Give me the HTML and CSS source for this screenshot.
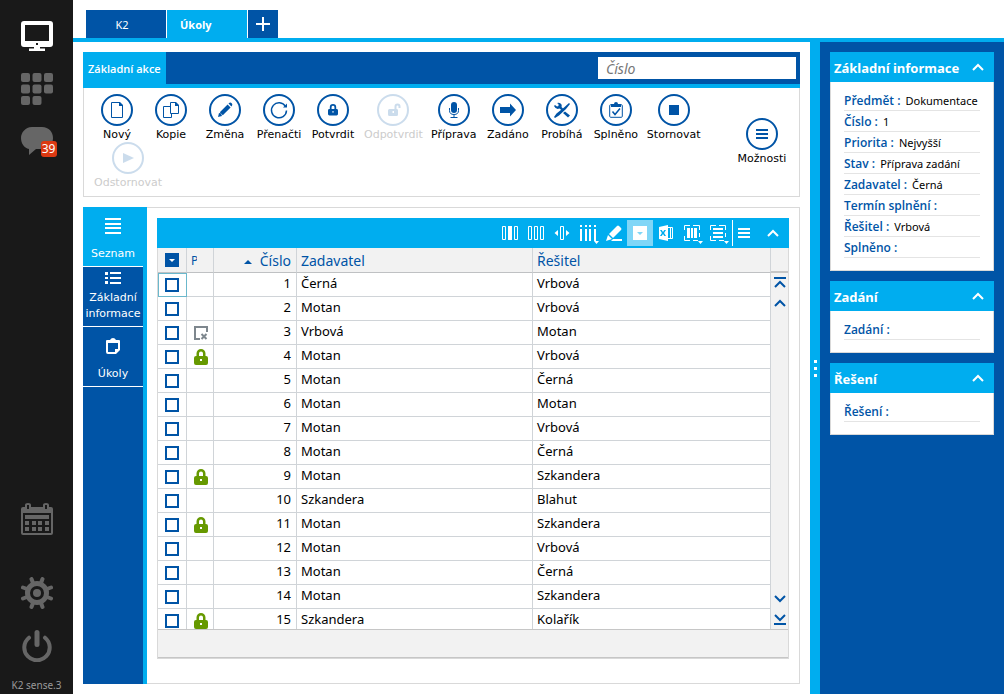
FILE: index.html
```html
<!DOCTYPE html>
<html lang="cs">
<head>
<meta charset="utf-8">
<title>K2 – Úkoly</title>
<link rel="stylesheet" href="styles.css">
</head>
<body>
<svg class="sprite" aria-hidden="true">
  <symbol id="lock" viewBox="0 0 14 16"><path fill-rule="evenodd" d="M2.500 7V4.500a4.500 4.500 0 0 1 9 0V7H12q2 0 2 2v5q0 2-2 2H2q-2 0-2-2V9q0-2 2-2zM5 7h4V4.500a2 2 0 0 0-4 0zM6 10v2h2v-2z"/></symbol>
  <symbol id="up" viewBox="0 0 12 8"><path d="M1 7l5-5 5 5" fill="none" stroke="currentColor" stroke-width="2"/></symbol>
</svg>
<div class="app">
  <nav class="rail" aria-label="Hlavní">
    <button class="rail-btn active" aria-label="Plocha"><svg viewBox="0 0 32 32"><path fill-rule="evenodd" d="M3 1h26q3 0 3 3v20q0 3-3 3H19v1.500h5V31H8v-2.500h5V27H3q-3 0-3-3V4q0-3 3-3zM4 5v16h24V5zM15 23v2h2v-2z"/></svg></button>
    <button class="rail-btn" aria-label="Moduly"><svg viewBox="0 0 32 32"><g><rect width="9" height="9" rx="2"/><rect x="11.500" width="9" height="9" rx="2"/><rect x="23" width="9" height="9" rx="2"/><rect y="11.500" width="9" height="9" rx="2"/><rect x="11.500" y="11.500" width="9" height="9" rx="2"/><rect x="23" y="11.500" width="9" height="9" rx="2"/><rect y="23" width="9" height="9" rx="2"/><rect x="11.500" y="23" width="9" height="9" rx="2"/></g></svg></button>
    <button class="rail-btn" aria-label="Zprávy"><svg viewBox="0 0 32 32"><path d="M11 1h10c7 0 11 5 11 11s-4 11-11 11h-6l-7 6v-6C3 22 0 17 0 12S4 1 11 1z"/></svg><span class="badge">39</span></button>
    <span class="rail-space"></span>
    <button class="rail-btn" aria-label="Kalendář"><svg viewBox="0 0 32 32"><path fill-rule="evenodd" d="M2 4h2V2q0-2 3-2t3 2v2h12V2q0-2 3-2t3 2v2h2q2 0 2 2v24q0 2-2 2H2q-2 0-2-2V6q0-2 2-2zM6 2v4h2V2zM24 2v4h2V2zM2 10v20h28V10z"/><path d="M4 12h24v4H4zM4 18h4v4H4zM11 18h4v4h-4zM17 18h4v4h-4zM24 18h4v4h-4zM4 24h4v4H4zM11 24h4v4h-4zM17 24h4v4h-4zM24 24h4v4h-4z"/></svg></button>
    <button class="rail-btn gear" aria-label="Nastavení"><svg viewBox="0 0 32 32"><circle class="ring" cx="16" cy="16" r="9.500"/><circle cx="16" cy="16" r="4"/><g stroke="currentColor" stroke-width="4" stroke-linecap="round"><path d="M12 6l-1.500-4M20 6l1.500-4M12 26l-1.500 4M20 26l1.500 4M6 12l-4-1.500M6 20l-4 1.500M26 12l4-1.500M26 20l4 1.500"/></g></svg></button>
    <button class="rail-btn" aria-label="Odhlásit"><svg viewBox="0 0 32 32"><g fill="none" stroke="currentColor" stroke-linecap="round"><path stroke-width="5" d="M16 2.500v12"/><path stroke-width="4" d="M8 7.700a12.700 12.700 0 1 0 16 0"/></g></svg></button>
    <span class="version">K2 sense.3</span>
  </nav>

  <div class="stage">
    <div class="tabs" role="tablist">
      <button class="tab" role="tab">K2</button>
      <button class="tab current" role="tab" aria-selected="true">Úkoly</button>
      <button class="tab-add" aria-label="Nová záložka"><svg viewBox="0 0 14 14"><path d="M7 0v14M0 7h14" stroke="#fff" stroke-width="2"/></svg></button>
    </div>
    <div class="workspace">
      <main class="main">
        <section class="ribbon">
          <div class="ribbon-head">
            <button class="ribbon-tab">Základní akce</button>
            <input class="search" type="text" placeholder="Číslo" aria-label="Číslo">
          </div>
          <div class="ribbon-body">
            <div class="actions">
              <button class="action"><svg viewBox="0 0 32 32"><circle cx="16" cy="16" r="15"/><path d="M10.500 8.500h8l3 3v12h-11z"/><path class="solid" d="M18 8h1l3 3v1h-4z"/></svg>Nový</button>
              <button class="action"><svg viewBox="0 0 32 32"><circle cx="16" cy="16" r="15"/><path d="M15.500 12.500h-7v11h8v-4M15.500 8.500h5l3 3v8h-8z"/><path class="solid" d="M20 8h1l3 3v1h-4z"/></svg>Kopie</button>
              <button class="action"><svg viewBox="0 0 32 32"><circle cx="16" cy="16" r="15"/><path class="solid" d="M9 23l1-4 2 0.500 1 2.500zM10.800 18.200l7.800-7.800 3 3-7.800 7.800zM19.500 9.500l1-.7q1.200-.6 2.200.5 1 1 .4 2.200l-.7 1z"/></svg>Změna</button>
              <button class="action"><svg viewBox="0 0 32 32"><circle cx="16" cy="16" r="15"/><path class="mid" d="M22.500 12.500a7.500 7.500 0 1 0 1 4"/><path class="solid" d="M20 13.500h4v-4z"/></svg>Přenačti</button>
              <button class="action"><svg viewBox="0 0 32 32"><circle cx="16" cy="16" r="15"/><use class="solid" href="#lock" x="11" y="9.500" width="10" height="12.500"/></svg>Potvrdit</button>
              <button class="action" disabled><svg viewBox="0 0 32 32"><circle cx="16" cy="16" r="15"/><path class="solid" fill-rule="evenodd" d="M12.500 15H20q1 0 1 1.500v4q0 1.500-1.500 1.500h-7q-1.500 0-1.500-1.500v-4q0-1.500 1.500-1.500zM15.500 17v2h1.500v-2z"/><path class="thick" d="M18.500 15.500V12.500q0-2 2-2t2 2V14"/></svg>Odpotvrdit</button>
              <button class="action"><svg viewBox="0 0 32 32"><circle cx="16" cy="16" r="15"/><rect class="solid" x="13" y="8" width="6" height="11" rx="3"/><path d="M11.500 14v2.500q0 4 4.500 4t4.500-4V14M16 21v3M12.500 23.500h7"/></svg>Příprava</button>
              <button class="action"><svg viewBox="0 0 32 32"><circle cx="16" cy="16" r="15"/><path class="solid" d="M8 13h10v-3.500l6 6.500-6 6.500V19H8z"/></svg>Zadáno</button>
              <button class="action"><svg viewBox="0 0 32 32"><circle cx="16" cy="16" r="15"/><path class="solid" d="M8 12l1-1 2 1.500 1.500-.5V10L11 9q3-1 4.500 1.500.5 1.500 0 2.500L18 15.500l-1.500 1.500-3-2.500Q10 16 8 12zM23 9l1 1-4 5-7 6.500-4 2.500-1-1 2.500-3.500 7.500-6zM19 17.500l5 4-2 2-5-4.500z"/></svg>Probíhá</button>
              <button class="action"><svg viewBox="0 0 32 32"><circle cx="16" cy="16" r="15"/><rect x="9.700" y="10.700" width="12.600" height="12.600" rx="1"/><path class="solid" d="M11 10h3q0-2 2-2t2 2h3v3H11z"/><path class="mid" d="M12.500 17.500l2.500 3 5-6"/></svg>Splněno</button>
              <button class="action"><svg viewBox="0 0 32 32"><circle cx="16" cy="16" r="15"/><path class="solid" d="M11 11h10v10H11z"/></svg>Stornovat</button>
              <button class="action" disabled><svg viewBox="0 0 32 32"><circle cx="16" cy="16" r="15"/><path class="solid" d="M11 11l11 5-11 5z"/></svg>Odstornovat</button>
            </div>
            <button class="action options"><svg viewBox="0 0 32 32"><circle cx="16" cy="16" r="15"/><path class="solid" d="M10 11h12v2H10zM10 15h12v2H10zM10 19h12v2H10z"/></svg>Možnosti</button>
          </div>
        </section>

        <section class="content">
          <nav class="views" aria-label="Pohledy">
            <button class="view current"><svg width="16" height="16" viewBox="0 0 16 16"><path d="M0 0h16v2H0zM0 5h16v2H0zM0 9h16v2H0zM0 14h16v2H0z"/></svg><span>Seznam</span></button>
            <button class="view tight"><svg width="16" height="12" viewBox="0 0 16 12"><path d="M0 0h3v3H0zM5 0h11v2H5zM0 5h3v2H0zM5 5h11v2H5zM0 9h3v3H0zM5 10h11v2H5z"/></svg><span>Základní informace</span></button>
            <button class="view"><svg width="16" height="16" viewBox="0 0 16 16"><path fill-rule="evenodd" d="M2 2h3q1-2 3-2t3 2h3q1 0 1 1v9l-4 4H3q-2 0-2-2V3q0-1 1-1zM3 5v9h7v-3h3V5z"/></svg><span>Úkoly</span></button>
          </nav>
          <div class="sheet">
            <div class="grid">
              <div class="toolbar">
                <button class="tool" aria-label="Ukotvit sloupec"><svg viewBox="0 0 20 20"><path d="M2.500 3.500h3v13h-3zM14.500 3.500h3v13h-3z" class="line"/><path d="M8 3h4v14H8z"/></svg></button>
                <button class="tool" aria-label="Sloupce"><svg viewBox="0 0 20 20"><path d="M2.500 3.500h3v13h-3zM8.500 3.500h3v13h-3zM14.500 3.500h3v13h-3z" class="line"/></svg></button>
                <button class="tool" aria-label="Šířka sloupců"><svg viewBox="0 0 20 20"><path d="M8.500 3.500h3v13h-3z" class="line"/><path d="M6 7v6l-3.500-3zM14 7v6l3.500-3z"/></svg></button>
                <button class="tool" aria-label="Nastavení sloupců"><svg viewBox="0 0 20 20"><path d="M2 2h2v2H2zM7 2h2v2H7zM11 2h2v2h-2zM16 2h2v2h-2zM2 6h2v12H2zM7 6h2v12H7zM11 6h2v12h-2zM16 6h2v12h-2zM16 18h5l-2.500 3z"/></svg></button>
                <button class="tool" aria-label="Upravit"><svg viewBox="0 0 20 20"><path d="M2 18l2-6 4 4zM5 11l8-8q1-1 2 0l2 2q1 1 0 2l-8 8zM9 16h9v2H7z"/></svg></button>
                <button class="tool pressed" aria-label="Filtr"><svg viewBox="0 0 20 20"><path fill-rule="evenodd" d="M3 3h14v14H3zM7 9l3 3 3-3z"/></svg></button>
                <button class="tool" aria-label="Export do Excelu"><svg viewBox="0 0 20 20"><path d="M11.500 4.500h5v11h-5M14.500 5v10" class="line"/><path fill-rule="evenodd" d="M3 4l9-2v16l-9-2zM4 7l1.900 3L4 13h1.700l1.300-2 1.300 2H10l-1.900-3L10 7H8.300L7 9 5.700 7z"/></svg></button>
                <button class="tool" aria-label="Výběr sloupců"><svg viewBox="0 0 20 20"><path d="M2.500 7V2.500H8M11 2.500h6.500V7M2.500 13v4.500H8M11 17.500h5M17.500 10v4" class="line"/><path d="M5 5h3v10H5zM9 5h2v10H9zM12 5h3v10h-3zM16 18h5l-2.500 3z"/></svg></button>
                <button class="tool" aria-label="Výběr řádků"><svg viewBox="0 0 20 20"><path d="M2.500 7V2.500H8M11 2.500h6.500V7M2.500 13v4.500H8M11 17.500h5M17.500 10v4" class="line"/><path d="M5 5h10v2H5zM5 9h10v2H5zM5 13h10v2H5zM16 18h5l-2.500 3z"/></svg></button>
                <span class="divider"></span>
                <button class="tool menu" aria-label="Nabídka"><svg viewBox="0 0 20 20"><path d="M4 5h12v2H4zM4 9h12v2H4zM4 13h12v2H4z"/></svg></button>
                <button class="tool collapse" aria-label="Sbalit"><svg class="chev"><use href="#up"/></svg></button>
              </div>
              <div class="grid-body">
                <div class="rows">
                <table>
                  <colgroup><col class="c-check"><col class="c-flag"><col class="c-num"><col class="c-owner"><col></colgroup>
                  <thead><tr>
                    <th class="check"><button class="select-all" aria-label="Výběr"><svg viewBox="0 0 14 14"><path d="M4 6h6l-3 3z" fill="#fff"/></svg></button></th>
                    <th><span class="clip">P</span></th>
                    <th class="num"><svg class="sort" viewBox="0 0 8 4"><path d="M0 4l4-4 4 4z"/></svg>Číslo</th>
                    <th>Zadavatel</th><th>Řešitel</th>
                  </tr></thead>
                  <tbody>
                    <tr><td class="check focus"><input type="checkbox" aria-label="Řádek 1"></td><td class="flag"></td><td class="num">1</td><td>Černá</td><td>Vrbová</td></tr>
                    <tr><td class="check"><input type="checkbox" aria-label="Řádek 2"></td><td class="flag"></td><td class="num">2</td><td>Motan</td><td>Vrbová</td></tr>
                    <tr><td class="check"><input type="checkbox" aria-label="Řádek 3"></td><td class="flag"><svg class="cancelled" viewBox="0 0 14 14"><path d="M6 13H1V1h12v5M7.500 8l5 5M12.500 8l-5 5"/></svg></td><td class="num">3</td><td>Vrbová</td><td>Motan</td></tr>
                    <tr><td class="check"><input type="checkbox" aria-label="Řádek 4"></td><td class="flag"><svg class="locked"><use href="#lock"/></svg></td><td class="num">4</td><td>Motan</td><td>Vrbová</td></tr>
                    <tr><td class="check"><input type="checkbox" aria-label="Řádek 5"></td><td class="flag"></td><td class="num">5</td><td>Motan</td><td>Černá</td></tr>
                    <tr><td class="check"><input type="checkbox" aria-label="Řádek 6"></td><td class="flag"></td><td class="num">6</td><td>Motan</td><td>Motan</td></tr>
                    <tr><td class="check"><input type="checkbox" aria-label="Řádek 7"></td><td class="flag"></td><td class="num">7</td><td>Motan</td><td>Vrbová</td></tr>
                    <tr><td class="check"><input type="checkbox" aria-label="Řádek 8"></td><td class="flag"></td><td class="num">8</td><td>Motan</td><td>Černá</td></tr>
                    <tr><td class="check"><input type="checkbox" aria-label="Řádek 9"></td><td class="flag"><svg class="locked"><use href="#lock"/></svg></td><td class="num">9</td><td>Motan</td><td>Szkandera</td></tr>
                    <tr><td class="check"><input type="checkbox" aria-label="Řádek 10"></td><td class="flag"></td><td class="num">10</td><td>Szkandera</td><td>Blahut</td></tr>
                    <tr><td class="check"><input type="checkbox" aria-label="Řádek 11"></td><td class="flag"><svg class="locked"><use href="#lock"/></svg></td><td class="num">11</td><td>Motan</td><td>Szkandera</td></tr>
                    <tr><td class="check"><input type="checkbox" aria-label="Řádek 12"></td><td class="flag"></td><td class="num">12</td><td>Motan</td><td>Vrbová</td></tr>
                    <tr><td class="check"><input type="checkbox" aria-label="Řádek 13"></td><td class="flag"></td><td class="num">13</td><td>Motan</td><td>Černá</td></tr>
                    <tr><td class="check"><input type="checkbox" aria-label="Řádek 14"></td><td class="flag"></td><td class="num">14</td><td>Motan</td><td>Szkandera</td></tr>
                    <tr><td class="check"><input type="checkbox" aria-label="Řádek 15"></td><td class="flag"><svg class="locked"><use href="#lock"/></svg></td><td class="num">15</td><td>Szkandera</td><td>Kolařík</td></tr>
                  </tbody>
                </table>
                </div>
                <div class="scroller">
                  <span class="scroller-head"></span>
                  <button aria-label="Na začátek"><svg viewBox="0 0 14 12"><path d="M1 1h12M2 10l5-5 5 5"/></svg></button>
                  <button aria-label="Nahoru"><svg viewBox="0 0 14 12"><path d="M2 9l5-5 5 5"/></svg></button>
                  <span class="scroller-space"></span>
                  <button aria-label="Dolů"><svg viewBox="0 0 14 12"><path d="M2 3l5 5 5-5"/></svg></button>
                  <button aria-label="Na konec"><svg viewBox="0 0 14 12"><path d="M1 11h12M2 2l5 5 5-5"/></svg></button>
                </div>
              </div>
              <div class="grid-foot"></div>
            </div>
          </div>
        </section>
      </main>
      <div class="splitter"><i></i><i></i><i></i></div>
      <aside class="info">
        <section class="card">
          <h2>Základní informace<button aria-label="Sbalit"><svg class="chev"><use href="#up"/></svg></button></h2>
          <dl>
            <div><dt>Předmět :</dt><dd>Dokumentace</dd></div>
            <div><dt>Číslo :</dt><dd>1</dd></div>
            <div><dt>Priorita :</dt><dd>Nejvyšší</dd></div>
            <div><dt>Stav :</dt><dd>Příprava zadání</dd></div>
            <div><dt>Zadavatel :</dt><dd>Černá</dd></div>
            <div><dt>Termín splnění :</dt><dd></dd></div>
            <div><dt>Řešitel :</dt><dd>Vrbová</dd></div>
            <div><dt>Splněno :</dt><dd></dd></div>
          </dl>
        </section>
        <section class="card">
          <h2>Zadání<button aria-label="Sbalit"><svg class="chev"><use href="#up"/></svg></button></h2>
          <dl><div><dt>Zadání :</dt><dd></dd></div></dl>
        </section>
        <section class="card">
          <h2>Řešení<button aria-label="Sbalit"><svg class="chev"><use href="#up"/></svg></button></h2>
          <dl><div><dt>Řešení :</dt><dd></dd></div></dl>
        </section>
      </aside>
    </div>
  </div>
</div>
</body>
</html>
```
FILE: styles.css
```css
:root {
  --blue: #0054a6;
  --cyan: #00adef;
  --edge: #d9d9d9;
  --cell: #d0d4d8;
  --grey: #f2f2f2;
}
* { box-sizing: border-box; }
body { margin: 0; font: 13px "Noto Sans", "Open Sans", sans-serif; color: #000; background: #fff; }
button { margin: 0; padding: 0; border: 0; background: none; color: inherit; font: inherit; }
svg { display: block; fill: currentColor; }
.sprite { position: absolute; width: 0; height: 0; }
.app { display: flex; height: 100vh; overflow: hidden; }

/* left rail */
.rail { width: 73px; flex: none; background: #191919; display: flex; flex-direction: column; align-items: center; gap: 21px; padding: 20px 0 1px; }
.rail-btn { width: 32px; height: 32px; color: #666; position: relative; flex: none; }
.rail-btn.active { color: #fff; }
.badge { position: absolute; left: 20px; top: 15px; width: 16px; height: 16px; border-radius: 3px; background: #dc3912; color: #fff; font-size: 12px; line-height: 16px; display: flex; justify-content: center; }
.rail-space { flex: 1; }
.gear { margin-top: 21px; }
.ring { fill: none; stroke: currentColor; stroke-width: 5; }
.version { font-size: 10px; line-height: 16px; color: #999; margin-top: -6px; }

/* tabs */
.stage { flex: 1; min-width: 0; display: flex; flex-direction: column; }
.tabs { display: flex; gap: 1px; padding: 10px 13px 0; border-bottom: 4px solid var(--cyan); }
.tab, .tab-add { height: 28px; background: var(--blue); color: #fff; font-size: 11px; }
.tab { width: 80px; padding-right: 8px; }
.tab.current { background: var(--cyan); font-family: "Open Sans", sans-serif; font-weight: 700; text-align: left; padding-left: 13px; }
.tab-add { width: 30px; display: flex; align-items: center; justify-content: center; }
.tab-add svg { width: 14px; height: 14px; }

.workspace { flex: 1; min-height: 0; display: flex; }
.main { flex: 1; min-width: 0; display: flex; flex-direction: column; gap: 10px; padding: 10px; }

/* ribbon */
.ribbon-head { display: flex; height: 36px; background: var(--blue); border-bottom: 4px solid var(--cyan); justify-content: space-between; align-items: center; }
.ribbon-tab { height: 32px; padding: 0 5px; background: var(--cyan); color: #fff; font: 600 11px "Open Sans", sans-serif; }
.search { width: 198px; height: 22px; margin-right: 4px; padding: 0 8px; border: 0; font: italic 14px "Noto Sans", sans-serif; }
.search::placeholder { color: #767676; }
.ribbon-body { display: flex; align-items: center; border: 1px solid var(--edge); border-top: 0; padding: 6px 0 6px 6px; }
.actions { flex: 1; display: flex; flex-wrap: wrap; }
.action { min-width: 54px; height: 48px; padding: 0 4px; font: 11px/18px "DejaVu Sans", sans-serif; display: flex; flex-direction: column; align-items: center; justify-content: flex-start; }
.action svg { width: 32px; height: 32px; flex: none; fill: none; stroke: var(--blue); }
.action circle { stroke-width: 2; }
.action .solid { fill: var(--blue); stroke: none; }
.action .thick { stroke-width: 2; }
.action .mid { stroke-width: 1.5; }
.action:disabled { color: #ccc; }
.action:disabled svg { opacity: .2; }
.options { width: 74px; }

/* content */
.content { flex: 1; min-height: 0; display: flex; }
.views { width: 64px; background: var(--blue); border-right: 4px solid var(--cyan); color: #fff; }
.view { width: 60px; height: 60px; border-bottom: 1px solid #fff; display: flex; flex-direction: column; align-items: center; justify-content: space-between; padding: 11px 0 4px; font: 11px/16px "DejaVu Sans", sans-serif; }
.view.current { background: var(--cyan); }
.view.tight { padding: 5px 0 4px; }
.sheet { flex: 1; min-width: 0; display: flex; border: 1px solid var(--edge); border-left: 0; padding: 10px 10px 24px; }
.grid { flex: 1; min-width: 0; display: flex; flex-direction: column; border: 1px solid var(--edge); border-top: 0; }
.toolbar { display: flex; align-items: center; justify-content: flex-end; height: 30px; margin: 0 -1px; background: var(--cyan); color: #fff; flex: none; }
.tool { width: 26px; height: 26px; display: flex; align-items: center; justify-content: center; }
.tool svg { width: 20px; height: 20px; overflow: visible; }
.tool .line { fill: none; stroke: #fff; }
.tool.pressed { background: #80d6f7; }
.divider { width: 1px; height: 26px; margin: 0 1px; background: #fff; }
.tool.menu { width: 20px; margin-right: 3px; }
.tool.collapse { width: 32px; }
svg.chev, .tool svg.chev { width: 12px; height: 8px; }

.grid-body { flex: 1; min-height: 0; display: flex; }
.rows { flex: 1; min-width: 0; overflow: hidden; }
table { width: 100%; table-layout: fixed; border-collapse: separate; border-spacing: 0; }
.c-check { width: 29px; }
.c-flag { width: 27px; }
.c-num { width: 83px; }
.c-owner { width: 236px; }
th, td { height: 24px; padding: 0 4px; border-right: 1px solid var(--cell); border-bottom: 1px solid var(--cell); text-align: left; line-height: 18px; white-space: nowrap; }
td { vertical-align: top; padding-top: 1px; }
th { height: 25px; padding-top: 2px; background: var(--grey); color: var(--blue); font-size: 14px; font-weight: normal; border-bottom-color: #bfc1c3; }
th .clip { display: block; width: 6px; overflow: hidden; font-size: 12px; }
th.num, td.num { text-align: right; padding-right: 5px; }
th.check { padding: 0; }
td.check { padding: 5px 0 0 7px; }
td.focus { border: 1px solid #6bb8cc; padding: 4px 0 0 6px; }
td input { appearance: none; display: block; width: 14px; height: 14px; margin: 0; border: 2px solid var(--blue); background: #fff; }
.select-all { display: block; width: 14px; height: 14px; margin-left: 7px; background: var(--blue); }
.sort { display: inline-block; width: 8px; height: 4px; margin-right: 8px; vertical-align: middle; }
td.flag { padding: 4px 0 0 7px; }
.cancelled { width: 14px; height: 14px; margin-top: 1px; fill: none; stroke: #7e878e; stroke-width: 2; }
.locked { width: 14px; height: 16px; color: #690; }

.scroller { width: 17px; flex: none; background: var(--grey); color: var(--blue); display: flex; flex-direction: column; align-items: center; }
.scroller-head { width: 100%; height: 25px; border-bottom: 2px solid #c6c6c6; }
.scroller-space { flex: 1; }
.scroller button { height: 20px; display: flex; align-items: center; }
.scroller svg { width: 14px; height: 12px; fill: none; stroke: currentColor; stroke-width: 2; }
.grid-foot { height: 29px; flex: none; background: var(--grey); border-top: 1px solid #c6c6c6; border-bottom: 1px solid #c6c6c6; }

/* right side */
.splitter { width: 10px; background: var(--cyan); display: flex; flex-direction: column; align-items: center; justify-content: center; gap: 4px; }
.splitter i { width: 3px; height: 3px; background: #fff; }
.info { width: 184px; flex: none; background: var(--blue); padding: 10px; display: flex; flex-direction: column; gap: 10px; }
.card { background: #fff; }
.card h2 { margin: 0; height: 30px; padding: 2px 10px 0 4px; display: flex; align-items: center; justify-content: space-between; white-space: nowrap; background: var(--cyan); color: #fff; font-size: 13px; font-weight: bold; }
.card h2 button { margin-bottom: 2px; }
.card dl { margin: 0; padding: 8px 13px 12px; border: 1px solid var(--edge); border-top: 0; font-size: 12px; }
.card dl div { height: 21px; line-height: 22px; display: flex; gap: 5px; border-bottom: 1px solid #e4e4e4; white-space: nowrap; }
.card dt { color: var(--blue); font-family: "Open Sans", sans-serif; font-weight: 600; word-spacing: normal; }
.card dd { margin: 0; font-size: 11px; }
```
